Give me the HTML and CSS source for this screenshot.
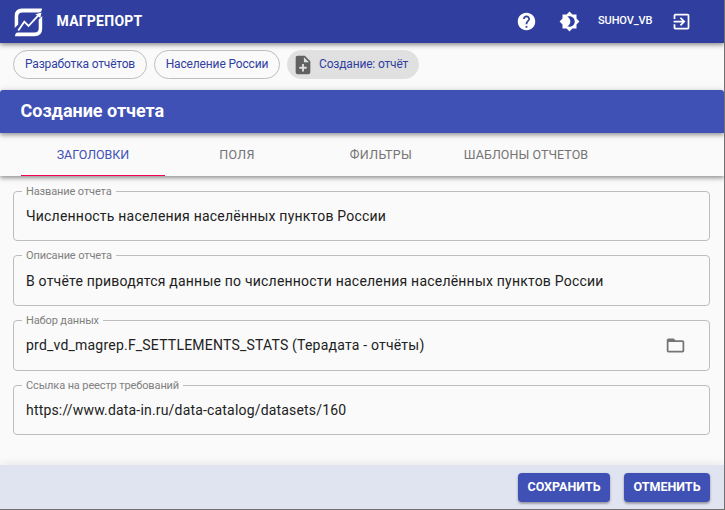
FILE: index.html
```html
<!DOCTYPE html>
<html lang="ru">
<head>
<meta charset="utf-8">
<title>Магрепорт</title>
<link rel="stylesheet" href="styles.css">
</head>
<body>
<div class="app">
  <header class="topbar">
    <svg class="logo" viewBox="0 0 29 29" fill="#fff">
      <path d="M28 .5H8Q.7 .5 .7 8v12l3.5-3.6V8.2Q4.2 4.4 8.5 4.4H25Q28 4 28 .5z"/>
      <path d="M1 28.2h19.5q7.7 0 7.7-7.7V8l-3.5 3.6v8.8q0 4-4.2 4H4Q1 24.6 1 28.2z"/>
      <path d="M4.3 22.5l6-8.8 4.2 4.3L25.3 6.3" fill="none" stroke="#fff" stroke-width="1.8"/>
      <path d="M21.5 6.2l6-1.6-1.2 5.5z"/>
    </svg>
    <span class="brand">МАГРЕПОРТ</span>
    <nav class="actions">
      <svg class="icon help" viewBox="0 0 24 24"><path d="M12 2C6.48 2 2 6.48 2 12s4.48 10 10 10 10-4.48 10-10S17.52 2 12 2zm1 17h-2v-2h2v2zm2.07-7.75l-.9.92C13.45 12.9 13 13.5 13 15h-2v-.5c0-1.1.45-2.1 1.17-2.83l1.24-1.26c.37-.36.59-.86.59-1.41 0-1.1-.9-2-2-2s-2 .9-2 2H8c0-2.21 1.79-4 4-4s4 1.79 4 4c0 .88-.36 1.68-.93 2.25z"/></svg>
      <svg class="icon theme" viewBox="0 0 24 24"><path d="M20 8.69V4h-4.69L12 .69 8.69 4H4v4.69L.69 12 4 15.31V20h4.69L12 23.31 15.31 20H20v-4.69L23.31 12 20 8.69zM12 18c-.89 0-1.74-.2-2.5-.55C11.56 16.5 13 14.42 13 12s-1.44-4.5-3.5-5.45C10.26 6.2 11.11 6 12 6c3.31 0 6 2.69 6 6s-2.69 6-6 6z"/></svg>
      <span class="user">SUHOV_VB</span>
      <svg class="icon exit" viewBox="0 0 24 24"><path d="M10.09 15.59L11.5 17l5-5-5-5-1.41 1.41L12.67 11H3v2h9.67l-2.58 2.59zM19 3H5c-1.11 0-2 .9-2 2v4h2V5h14v14H5v-4H3v4c0 1.1.89 2 2 2h14c1.1 0 2-.9 2-2V5c0-1.1-.9-2-2-2z"/></svg>
    </nav>
  </header>

  <div class="crumbs">
    <span class="chip chip-dev">Разработка отчётов</span>
    <span class="chip chip-pop">Население России</span>
    <span class="chip chip-current">
      <svg class="chip-icon" viewBox="0 0 24 24"><path d="M14 2H6c-1.1 0-1.99.9-1.99 2L4 20c0 1.1.89 2 1.99 2H18c1.1 0 2-.9 2-2V8l-6-6zm2 14h-3v3h-2v-3H8v-2h3v-3h2v3h3v2zm-3-7V3.5L18.5 9H13z"/></svg>
      <span>Создание: отчёт</span>
    </span>
  </div>

  <h1 class="title">Создание отчета</h1>
  <div class="tabs">
    <div class="tab tab-active">ЗАГОЛОВКИ</div>
    <div class="tab">ПОЛЯ</div>
    <div class="tab">ФИЛЬТРЫ</div>
    <div class="tab tab-wide">ШАБЛОНЫ ОТЧЕТОВ</div>
  </div>

  <main class="form">
    <div class="field">
      <span class="label">Название отчета</span>
      <span class="value">Численность населения населённых пунктов России</span>
    </div>
    <div class="field tall">
      <span class="label">Описание отчета</span>
      <span class="value">В отчёте приводятся данные по численности населения населённых пунктов России</span>
    </div>
    <div class="field tall">
      <span class="label">Набор данных</span>
      <span class="value value-raised">prd_vd_magrep.F_SETTLEMENTS_STATS (Терадата - отчёты)</span>
      <svg class="folder" viewBox="0 0 24 24"><path d="M20 6h-8l-2-2H4c-1.1 0-1.99.9-1.99 2L2 18c0 1.1.9 2 2 2h16c1.1 0 2-.9 2-2V8c0-1.1-.9-2-2-2zm0 12H4V8h16v10z"/></svg>
    </div>
    <div class="field">
      <span class="label">Ссылка на реестр требований</span>
      <span class="value value-link">https://www.data-in.ru/data-catalog/datasets/160</span>
    </div>
  </main>

  <footer class="footer">
    <button class="btn save">СОХРАНИТЬ</button>
    <button class="btn cancel">ОТМЕНИТЬ</button>
  </footer>
</div>
</body>
</html>
```
FILE: styles.css
```css
* { box-sizing: border-box; }

body {
  margin: 0;
  font-family: Roboto, "Liberation Sans", sans-serif;
  background: #fafafa;
}

.app {
  width: 725px;
  height: 510px;
  display: flex;
  flex-direction: column;
  overflow: hidden;
  border-right: 1px solid #707070;
  border-bottom: 1px solid #707070;
}

.topbar {
  flex: none;
  height: 43px;
  display: flex;
  align-items: center;
  padding: 0 32px 0 14px;
  background: #303f9f;
  color: #fff;
  box-shadow: 0 2px 4px rgba(0, 0, 0, .35), 0 1px 8px rgba(0, 0, 0, .12);
}

.logo { width: 29px; height: 29px; margin-top: 1px; }

.brand {
  margin-left: 13.5px;
  font-size: 14px;
  font-weight: 700;
  letter-spacing: .25px;
  margin-top: -1px;
}

.actions {
  margin-left: auto;
  display: flex;
  align-items: center;
}

.icon { width: 21px; height: 21px; fill: #fff; }
.theme { margin-left: 22px; }
.user {
  width: 54px;
  margin: -2px 19px 0 18px;
  font-size: 11px;
  font-weight: 500;
  letter-spacing: -.1px;
  white-space: nowrap;
}

.crumbs {
  flex: none;
  height: 47px;
  display: flex;
  align-items: flex-start;
  gap: 7px;
  padding: 7px 13px 0;
}

.chip {
  height: 29px;
  display: flex;
  align-items: center;
  justify-content: center;
  border: 1px solid #bdbdbd;
  border-radius: 15px;
  color: #303f9f;
  font-size: 12px;
  letter-spacing: -.17px;
  white-space: nowrap;
  padding-bottom: 1px;
}
.chip-dev { width: 134px; }
.chip-pop { width: 126px; letter-spacing: -.15px; }
.chip-current {
  width: 132px;
  justify-content: flex-start;
  border-color: #e0e0e0;
  background: #e0e0e0;
  padding-left: 4px;
}
.chip-icon { width: 22px; height: 22px; margin: 2px 5px 0 0; fill: #616161; }

.title {
  flex: none;
  height: 43px;
  margin: 0;
  padding-left: 20.5px;
  border-radius: 3px 3px 0 0;
  background: #3f51b5;
  color: #fff;
  font-size: 18px;
  line-height: 42px;
  font-weight: 700;
  letter-spacing: -.03px;
  box-shadow: 0 2px 4px rgba(0, 0, 0, .35), 0 1px 8px rgba(0, 0, 0, .12);
  position: relative;
}

.tabs {
  flex: none;
  height: 43px;
  display: flex;
  padding-left: 21px;
  box-shadow: 0 2px 4px rgba(0, 0, 0, .35), 0 1px 8px rgba(0, 0, 0, .12);
}
.tab {
  width: 144px;
  text-align: center;
  font-size: 12.5px;
  line-height: 43px;
  letter-spacing: .35px;
  color: #757575;
  white-space: nowrap;
}
.tab-active {
  color: #3f51b5;
  border-bottom: 1px solid #f50057;
  letter-spacing: -.02px;
}
.tab-wide { width: 146px; letter-spacing: .05px; }

.form {
  flex: 1;
  display: flex;
  flex-direction: column;
  gap: 14px;
  padding: 15px 14px 0 13px;
}
.field {
  flex: none;
  height: 50px;
  display: flex;
  align-items: center;
  position: relative;
  border: 1px solid #bdbdbd;
  border-radius: 4px;
  padding: 0 23px 0 12px;
}
.tall { height: 51px; }
.label {
  position: absolute;
  left: 8px;
  top: -7.5px;
  padding: 0 4px;
  background: #fafafa;
  color: #808080;
  font-size: 11px;
  line-height: 14px;
  letter-spacing: -.12px;
  white-space: nowrap;
}
.value {
  color: #212121;
  font-size: 14px;
  letter-spacing: .21px;
  white-space: nowrap;
}
.value-raised { margin-top: -1px; }
.value-link { letter-spacing: .18px; }
.folder { width: 21px; height: 21px; margin-left: auto; fill: #757575; }

.footer {
  flex: none;
  height: 44px;
  display: flex;
  justify-content: flex-end;
  gap: 14px;
  padding: 8px 14px 0 0;
  background: #e0e4f0;
  box-shadow: 0 -2px 8px rgba(0, 0, 0, .07);
}
.btn {
  height: 29px;
  padding: 0 0 2px;
  border: 0;
  border-radius: 4px;
  background: #3f51b5;
  color: #fff;
  font-family: inherit;
  font-size: 12.5px;
  font-weight: 700;
  box-shadow: 0 2px 2px rgba(0, 0, 0, .2), 0 1px 3px rgba(0, 0, 0, .2);
}
.save { width: 92px; }
.cancel { width: 86px; }
```
